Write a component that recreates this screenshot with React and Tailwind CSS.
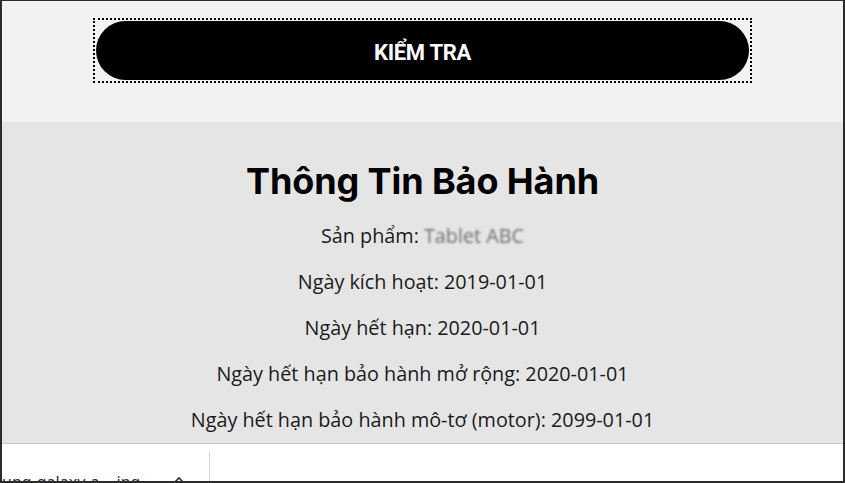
export default function App() {
  const rows = [
    ["Ngày kích hoạt:", "2019-01-01"],
    ["Ngày hết hạn:", "2020-01-01"],
    ["Ngày hết hạn bảo hành mở rộng:", "2020-01-01"],
    ["Ngày hết hạn bảo hành mô-tơ (motor):", "2099-01-01"],
  ];
  return (
    <div className="w-[845px] h-[483px] overflow-hidden border-t border-l-2 border-r-2 border-b-2 border-[#2b2b2b] flex flex-col bg-white">
      {/* check button strip */}
      <div className="h-[121px] bg-[#f2f2f2] flex justify-center pt-[17px] shrink-0">
        <div className="h-[65px] border-2 border-dotted border-black p-px">
          <button className="w-[653px] h-[59px] rounded-full bg-black text-white text-[22px] font-bold tracking-[-0.3px] pt-[4px]" style={{ fontFamily: 'Roboto, sans-serif' }}>
            KIỂM TRA
          </button>
        </div>
      </div>

      {/* warranty info panel */}
      <div className="h-[322px] bg-[#e5e5e5] border-b border-[#c8c8c8] flex flex-col items-center pt-[37px] shrink-0 text-[#1a1a1a]" style={{ fontFamily: '"Open Sans", sans-serif' }}>
        <h1 className="h-[44px] leading-[44px] text-[36px] font-bold text-black tracking-[-0.1px]" style={{ fontFamily: 'Inter, sans-serif' }}>
          Thông Tin Bảo Hành
        </h1>
        <div className="mt-[10px] flex flex-col items-center text-[19.8px]">
          <p className="h-[46px] leading-[46px]">
            Sản phẩm: <span className="text-[#6f6f6f] blur-[1.2px]">Tablet ABC</span>
          </p>
          {rows.map(([label, value]) => (
            <p key={label} className="h-[46px] leading-[46px]">
              {label} {value}
            </p>
          ))}
        </div>
      </div>

      {/* download shelf */}
      <div className="flex-1 flex relative">
        <div className="w-[207px] pt-[26px] flex items-start justify-between pr-[24px] text-[16px] text-[#333]" style={{ fontFamily: '"Noto Sans", sans-serif' }}>
          <span className="whitespace-nowrap">ung-galaxy-a....jpg</span>
          <svg width="12" height="8" viewBox="0 0 12 8" className="mt-[6px]">
            <path d="M1 7 L6 2 L11 7" fill="none" stroke="#333" strokeWidth="1.6" />
          </svg>
        </div>
        <div className="w-px bg-[#d6d6d6] mt-[8px]" />
      </div>
    </div>
  );
}
